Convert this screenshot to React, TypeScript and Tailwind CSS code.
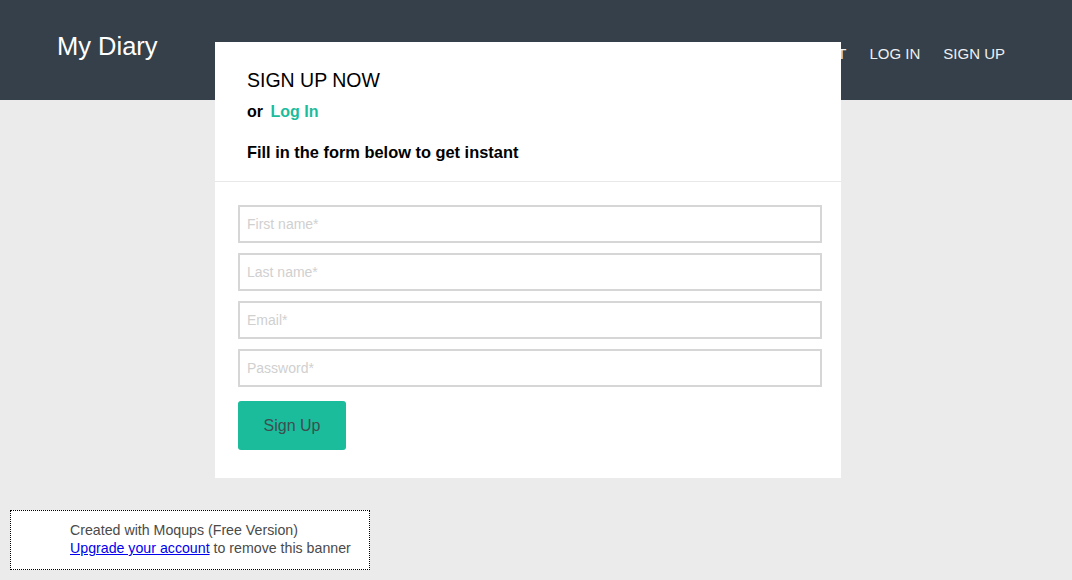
import React from 'react'

const font = { fontFamily: '"Liberation Sans", Arial, sans-serif' }

const fields = ['First name*', 'Last name*', 'Email*', 'Password*']

function Header() {
  return (
    <header className="flex h-[100px] items-start justify-between bg-[#35404a] pl-[57px] pr-[67px]">
      <div className="pt-[31px] text-[25.5px] leading-[30px] text-white">My Diary</div>
      <nav className="flex gap-[23px] pt-[44px] text-[15px] leading-[20px] text-[#eef0f1]">
        <a>ABOUT</a>
        <a>LOG IN</a>
        <a>SIGN UP</a>
      </nav>
    </header>
  )
}

function SignUpModal() {
  return (
    <div className="absolute left-[215px] top-[42px] w-[626px] bg-white">
      <div className="border-b border-[#e8e8e8] pb-[19px] pl-[32px] pt-[26px]">
        <h2 className="text-[19.5px] leading-[24px] text-black">SIGN UP NOW</h2>
        <p className="mt-[10px] text-[16px] font-bold leading-[20px] text-black">
          or <span className="ml-[3px] text-[#1abc9c]">Log In</span>
        </p>
        <p className="mt-[20px] text-[16.4px] font-bold leading-[20px] text-black">
          Fill in the form below to get instant
        </p>
      </div>
      <form className="pb-[28px] pl-[23px] pr-[19px] pt-[23px]">
        <div className="flex flex-col gap-[10px]">
          {fields.map((f) => (
            <input
              key={f}
              placeholder={f}
              className="h-[38px] w-full border-2 border-[#d6d6d6] px-[7px] text-[14px] text-[#555] outline-none placeholder:text-[#d0d0d0]"
            />
          ))}
        </div>
        <button
          type="button"
          className="mt-[14px] h-[49px] w-[108px] rounded-[3px] bg-[#1abc9c] text-[16px] text-[#3d4f4f]"
        >
          Sign Up
        </button>
      </form>
    </div>
  )
}

function Banner() {
  return (
    <div className="absolute left-[10px] top-[510px] h-[60px] w-[360px] border border-dotted border-black bg-white pl-[59px] pt-[10px] text-[14.2px] leading-[18px] text-[#4a4a4a]">
      <div>Created with Moqups (Free Version)</div>
      <div>
        <a className="text-[#0000ee] underline">Upgrade your account</a> to remove this banner
      </div>
    </div>
  )
}

export default function App() {
  return (
    <div className="relative h-[580px] w-full overflow-hidden bg-[#ebebeb]" style={font}>
      <Header />
      <SignUpModal />
      <Banner />
    </div>
  )
}
